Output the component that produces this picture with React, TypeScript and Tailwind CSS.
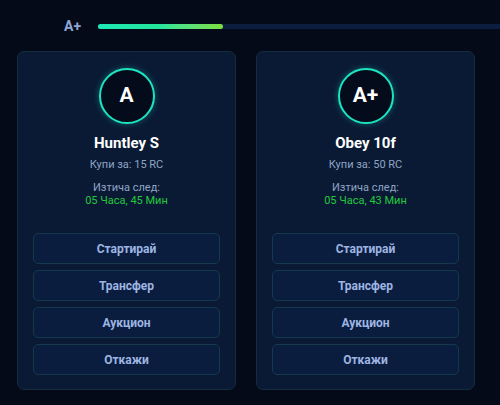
import React from "react";

type Offer = {
  grade: string;
  name: string;
  price: number;
  expires: string;
};

const OFFERS: Offer[] = [
  { grade: "A", name: "Huntley S", price: 15, expires: "05 Часа, 45 Мин" },
  { grade: "A+", name: "Obey 10f", price: 50, expires: "05 Часа, 43 Мин" },
];

const ACTIONS = ["Стартирай", "Трансфер", "Аукцион", "Откажи"];

function OfferCard({ offer }: { offer: Offer }) {
  return (
    <div className="w-[219px] h-[339px] rounded-[7px] border border-[#132c40] bg-[#0a1a34] px-[15px] pt-[16px] flex flex-col items-center">
      <div className="w-[56px] h-[56px] rounded-full border-2 border-[#1de3c0] bg-[#040b1a] flex items-center justify-center text-white font-bold text-[21px] shadow-[0_0_6px_rgba(29,227,192,0.35)]">
        {offer.grade}
      </div>
      <div className="mt-[9px] text-[15px] leading-[20px] font-bold text-white">{offer.name}</div>
      <div className="mt-[2px] text-[11px] leading-[20px] text-[#8fa4c4]">Купи за: {offer.price} RC</div>
      <div className="mt-[6px] text-[11px] leading-[13px] text-[#8fa4c4]">Изтича след:</div>
      <div className="text-[11px] leading-[13px] text-[#22c93e]">{offer.expires}</div>
      <div className="mt-[26px] w-full flex flex-col gap-[6px]">
        {ACTIONS.map((a) => (
          <button
            key={a}
            type="button"
            className="h-[31px] w-full rounded-[5px] border border-[#14384c] bg-[#0b1d3f] text-[12px] font-bold text-[#9db5e2]"
          >
            {a}
          </button>
        ))}
      </div>
    </div>
  );
}

export default function App() {
  return (
    <div
      className="w-[500px] h-[405px] overflow-hidden bg-[#040a18]"
      style={{ fontFamily: "Roboto, 'Noto Sans', sans-serif" }}
    >
      <div className="pt-[17px] pl-[64px] flex items-center gap-[17px]">
        <span className="text-[14px] leading-[18px] font-bold text-[#8ea6d6]">A+</span>
        <div className="flex-1 h-[5px] bg-[#0c1d42]">
          <div className="h-full w-[125px] rounded-full bg-gradient-to-r from-[#1de9b6] via-[#24e59a] to-[#7ddd3c]" />
        </div>
      </div>
      <div className="mt-[16px] pl-[17px] flex gap-[20px]">
        {OFFERS.map((o) => (
          <OfferCard key={o.name} offer={o} />
        ))}
      </div>
    </div>
  );
}
